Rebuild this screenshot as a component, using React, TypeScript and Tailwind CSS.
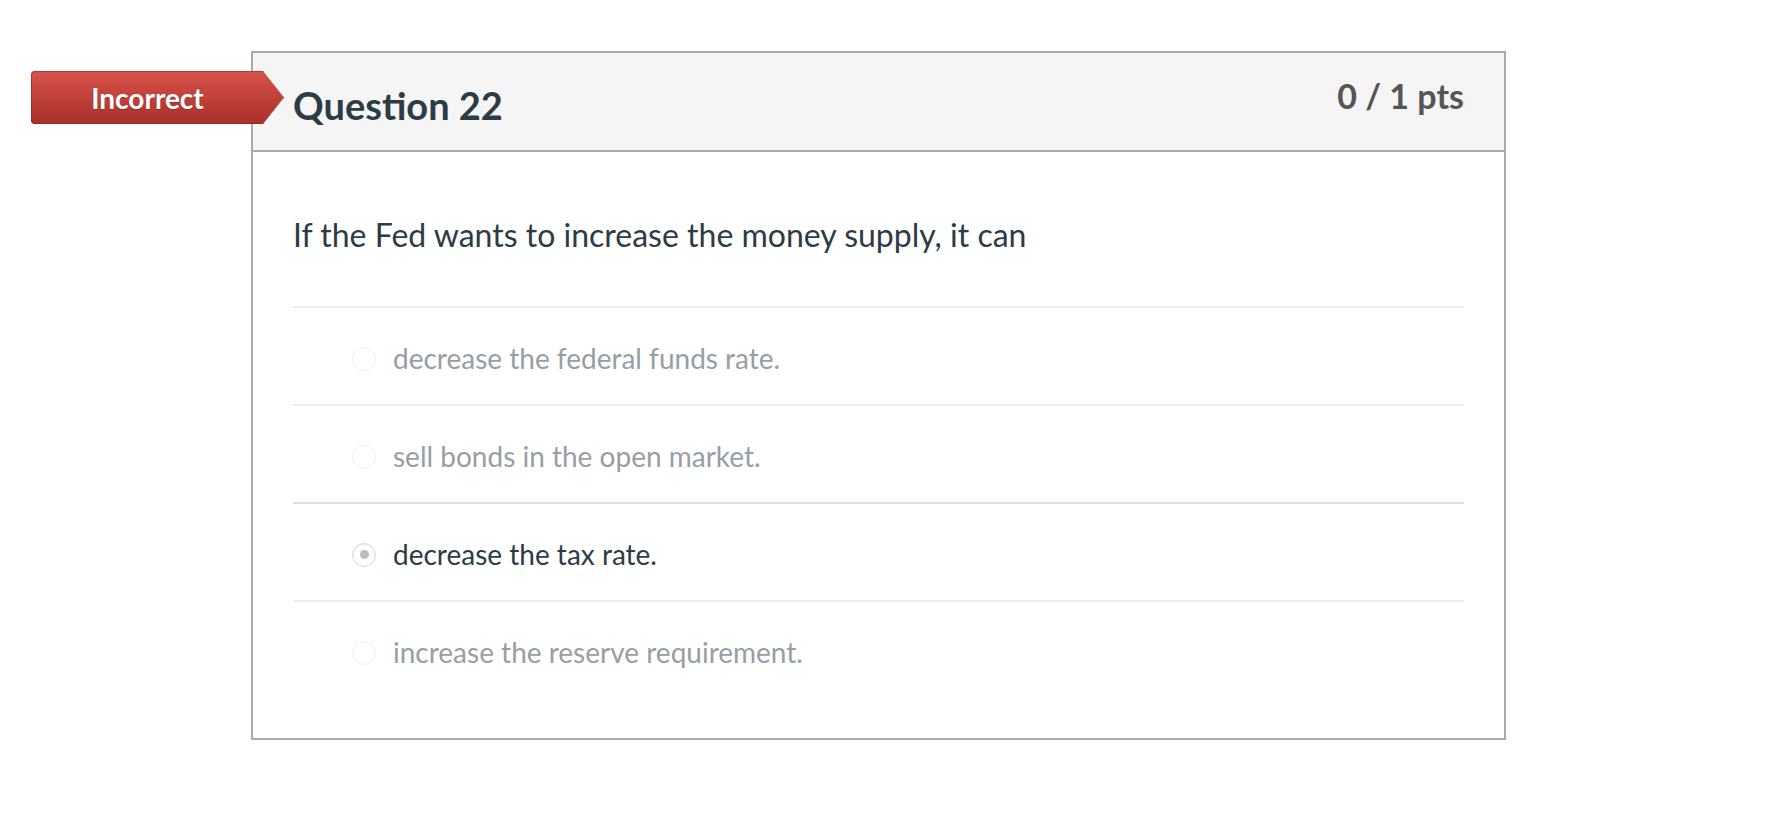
import React from 'react';

const ANSWERS = [
  { text: 'decrease the federal funds rate.', selected: false },
  { text: 'sell bonds in the open market.', selected: false },
  { text: 'decrease the tax rate.', selected: true },
  { text: 'increase the reserve requirement.', selected: false },
];

function Radio({ checked }: { checked: boolean }) {
  return (
    <span
      className={`flex h-[24px] w-[24px] shrink-0 items-center justify-center rounded-full border bg-white ${
        checked ? 'border-[#d9d9d9] shadow-[inset_0_1px_2px_rgba(0,0,0,0.08)]' : 'border-[#efefef]'
      }`}
    >
      {checked && <span className="h-[9px] w-[9px] rounded-full bg-[#bdbdbd]" />}
    </span>
  );
}

export default function App() {
  return (
    <div className="min-h-screen bg-white font-['Lato',sans-serif] pt-[51px]">
      <div className="relative ml-[251px] w-[1255px] border-2 border-[#aaaaaa]">
        {/* result badge */}
        <div className="absolute left-[-222px] top-[18px] flex h-[53px] w-[253px] items-center pr-[20px] rounded-l-[4px] bg-gradient-to-b from-[#d7544b] to-[#a92f28] [clip-path:polygon(0_0,calc(100%-21px)_0,100%_50%,calc(100%-21px)_100%,0_100%)] shadow-[inset_0_0_0_1px_rgba(140,30,25,0.5)]">
          <span className="w-full pt-[2px] text-center text-[28px] font-bold leading-[1.2] text-white [text-shadow:0_1px_1px_rgba(0,0,0,0.25)]">
            Incorrect
          </span>
        </div>

        {/* header */}
        <div className="flex h-[99px] items-start justify-between border-b-2 border-[#aaaaaa] bg-[#f5f5f5] px-[40px] pt-[23px]">
          <h2 className="mt-[7px] text-[38px] font-bold leading-[1.2] text-[#2d3b45]">Question 22</h2>
          <span className="text-[34px] font-bold leading-[1.2] text-[#555555]">0 / 1 pts</span>
        </div>

        {/* body */}
        <div className="px-[40px] pt-[64px] pb-[40px]">
          <p className="mb-[52px] text-[32px] leading-[1.2] text-[#2d3b45]">
            If the Fed wants to increase the money supply, it can
          </p>
          <div>
            {ANSWERS.map((a, i) => (
              <div
                key={i}
                className={`flex h-[98px] items-center border-t-2 pl-[59px] pt-[5px] ${
                  i === 2 ? 'border-[#dedede]' : 'border-[#ececec]'
                }`}
              >
                <Radio checked={a.selected} />
                <span
                  className={`ml-[17px] text-[28px] leading-[1.2] ${
                    a.selected ? 'text-[#2d3b45]' : 'text-[#979ea5]'
                  }`}
                >
                  {a.text}
                </span>
              </div>
            ))}
          </div>
        </div>
      </div>
    </div>
  );
}
